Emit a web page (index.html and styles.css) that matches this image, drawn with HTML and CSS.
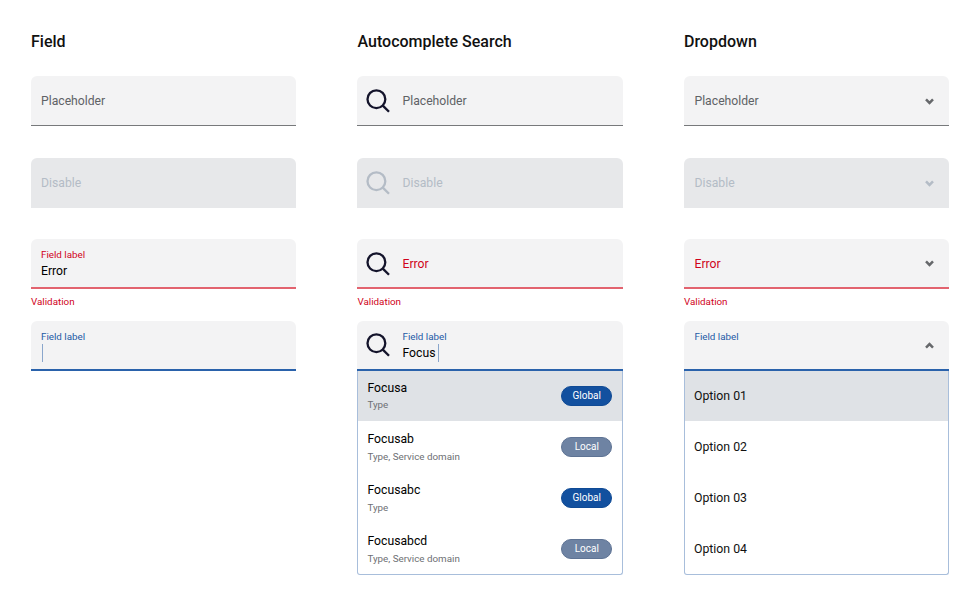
FILE: index.html
```html
<!DOCTYPE html>
<html lang="en">
<head>
<meta charset="utf-8">
<title>Form fields</title>
<link rel="stylesheet" href="styles.css">
</head>
<body>
<svg class="sprite" width="0" height="0" aria-hidden="true">
  <symbol id="search" viewBox="0 0 24 24"><circle cx="10.4" cy="10.2" r="8.9" fill="none" stroke="currentColor" stroke-width="2.3"/><path d="M16.8 16.6 23 22.8" fill="none" stroke="currentColor" stroke-width="2.3"/></symbol>
  <symbol id="down" viewBox="0 0 9 7"><path d="M1 1.4 4.5 4.9 8 1.4" fill="none" stroke="currentColor" stroke-width="2.5"/></symbol>
  <symbol id="up" viewBox="0 0 9 7"><path d="M1 5.6 4.5 2.1 8 5.6" fill="none" stroke="currentColor" stroke-width="2.5"/></symbol>
</svg>
<main class="page">
  <section class="col">
    <h2 class="title">Field</h2>
    <div class="slot"><div class="field"><span class="text ph">Placeholder</span></div></div>
    <div class="slot"><div class="field disabled"><span class="text">Disable</span></div></div>
    <div class="slot">
      <div class="field error"><div class="stack"><span class="label">Field label</span><span class="text">Error</span></div></div>
      <div class="validation">Validation</div>
    </div>
    <div class="slot last">
      <div class="field focus"><div class="stack"><span class="label">Field label</span><span class="text"><i class="caret first"></i></span></div></div>
    </div>
  </section>

  <section class="col">
    <h2 class="title">Autocomplete Search</h2>
    <div class="slot"><div class="field icon"><svg class="ico"><use href="#search"/></svg><span class="text ph">Placeholder</span></div></div>
    <div class="slot"><div class="field icon disabled"><svg class="ico"><use href="#search"/></svg><span class="text">Disable</span></div></div>
    <div class="slot">
      <div class="field icon error"><svg class="ico"><use href="#search"/></svg><span class="text red">Error</span></div>
      <div class="validation">Validation</div>
    </div>
    <div class="slot last">
      <div class="field icon focus"><svg class="ico"><use href="#search"/></svg><div class="stack"><span class="label">Field label</span><span class="text">Focus<i class="caret"></i></span></div></div>
      <ul class="list">
        <li class="row on"><div class="info"><b>Focusa</b><small>Type</small></div><span class="pill global">Global</span></li>
        <li class="row"><div class="info"><b>Focusab</b><small>Type, Service domain</small></div><span class="pill local">Local</span></li>
        <li class="row"><div class="info"><b>Focusabc</b><small>Type</small></div><span class="pill global">Global</span></li>
        <li class="row"><div class="info"><b>Focusabcd</b><small>Type, Service domain</small></div><span class="pill local">Local</span></li>
      </ul>
    </div>
  </section>

  <section class="col">
    <h2 class="title">Dropdown</h2>
    <div class="slot"><div class="field drop"><span class="text ph">Placeholder</span><svg class="chev"><use href="#down"/></svg></div></div>
    <div class="slot"><div class="field drop disabled"><span class="text">Disable</span><svg class="chev"><use href="#down"/></svg></div></div>
    <div class="slot">
      <div class="field drop error"><span class="text red">Error</span><svg class="chev"><use href="#down"/></svg></div>
      <div class="validation">Validation</div>
    </div>
    <div class="slot last">
      <div class="field drop focus"><span class="label top">Field label</span><svg class="chev"><use href="#up"/></svg></div>
      <ul class="list">
        <li class="row opt on">Option 01</li>
        <li class="row opt">Option 02</li>
        <li class="row opt">Option 03</li>
        <li class="row opt">Option 04</li>
      </ul>
    </div>
  </section>
</main>
</body>
</html>
```

FILE: styles.css
```css
* { box-sizing: border-box; }
html, body { margin: 0; background: #fff; }
body { font-family: Roboto, "Liberation Sans", sans-serif; color: #000; }
.sprite { position: absolute; }

.page {
  display: grid;
  grid-template-columns: repeat(3, 265.3px);
  column-gap: 61.2px;
  padding: 32px 0 0 31px;
}
.col { display: flex; flex-direction: column; }
.title {
  margin: 0 0 25px;
  font-size: 16px;
  line-height: 19px;
  font-weight: 500;
  color: #111;
}
.slot { height: 81.5px; }
.slot.last { height: auto; }

.field {
  height: 50.4px;
  display: flex;
  align-items: center;
  padding: 1px 10px 0;
  background: #f3f3f4;
  border-radius: 6px 6px 0 0;
  border-bottom: 1.5px solid #77797b;
}
.text { font-size: 12.2px; line-height: 16px; display: flex; align-items: center; }
.ph { color: #5f6266; }
.red { color: #d0021b; }

.disabled { background: #e7e8ea; border-bottom: 0; color: #b4bcc6; }
.disabled .ico, .disabled .chev { color: #b4bcc6; }

.error { border-bottom: 2px solid #e2636f; }
.focus { border-bottom: 2px solid #2a62ab; }

.stack { display: flex; flex-direction: column; align-self: flex-start; padding-top: 9px; }
.label { font-size: 9.8px; line-height: 12px; color: #1d5aa6; }
.error .label { color: #d0021b; }
.stack .text { height: 18px; margin-top: 1px; }
.caret { display: inline-block; width: 1px; height: 18px; margin-left: 3px; background: #8aa6cc; }
.caret.first { margin-left: 1px; }

.validation { margin-top: 6.7px; font-size: 9.8px; line-height: 12px; color: #d0021b; }

.icon { padding-left: 9px; }
.ico { width: 24px; height: 24px; flex: none; margin-right: 12px; color: #14142b; }

.drop { justify-content: space-between; padding-left: 10.5px; padding-right: 15px; }
.chev { width: 9px; height: 7px; flex: none; color: #66686b; }
.top { align-self: flex-start; margin-top: 9px; }

.list {
  list-style: none;
  margin: 0;
  padding: 0;
  height: 203.7px;
  background: #fff;
  border: 1px solid #a8bedb;
  border-top: 0;
  border-radius: 0 0 3px 3px;
}
.row {
  height: 51px;
  display: flex;
  align-items: center;
  justify-content: space-between;
  padding: 0 9.5px 1px 9px;
}
.row.on { height: 49.7px; margin-bottom: 1.5px; padding-bottom: 0; background: #dfe2e6; }
.info { display: flex; flex-direction: column; }
.info b { font-size: 12.2px; line-height: 16px; font-weight: 400; color: #000; }
.info small { margin-top: 3px; font-size: 9.8px; line-height: 13px; color: #6e7074; }
.row.on small { margin-top: 2px; }
.pill {
  width: 51px;
  height: 20px;
  border-radius: 10px;
  border: 1px solid #0f4a95;
  color: #fff;
  font-size: 10px;
  line-height: 18px;
  text-align: center;
}
.global { background: #12509f; }
.local { background: #6e83a3; border-color: #5e7394; }
.opt { font-size: 12.3px; color: #111; }
```
